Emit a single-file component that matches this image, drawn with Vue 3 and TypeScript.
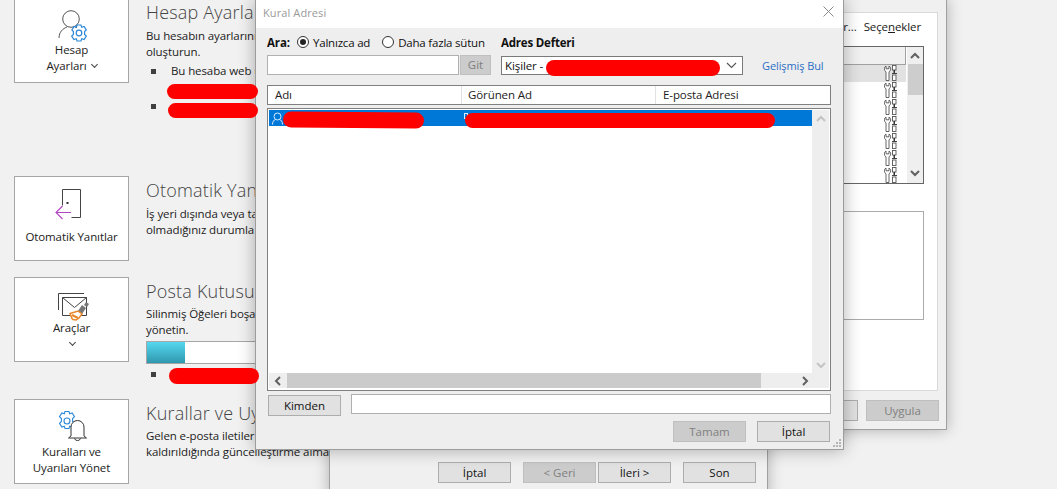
<script setup lang="ts">
const rows: number[] = [0, 1, 2, 3, 4, 5, 6]
</script>

<template>
  <div class="page">
    <svg width="0" height="0" class="defs">
      <symbol id="tools" viewBox="0 0 15 17">
        <path d="M2 1A3.300 3.300 0 0 0 2 6.800V15.500H5V6.800A3.300 3.300 0 0 0 5 1V3.800H2z" fill="#fff" stroke="#555" stroke-width="0.900" />
        <rect x="8.500" y="0.500" width="3.500" height="4.500" fill="#fff" stroke="#555" stroke-width="0.900" />
        <path d="M10.250 5v4" stroke="#333" stroke-width="1.500" />
        <path d="M8 8.500h5" stroke="#444" />
        <rect x="8.500" y="10" width="3.500" height="5.500" fill="#fff" stroke="#555" stroke-width="0.900" />
      </symbol>
    </svg>

    <!-- backstage content -->
    <main class="backstage">
      <section class="sec sec1">
        <button class="tile tile1">
          <svg class="ico" width="40" height="36" viewBox="0 0 40 36">
            <circle cx="18" cy="11" r="8.300" fill="none" stroke="#555" stroke-width="1" />
            <path d="M6 30c0-6 4-9.500 8-11M22 19l2 .7" fill="none" stroke="#555" />
            <g fill="none" stroke="#2b88d8" stroke-width="1.200" transform="translate(-1 1)">
              <circle cx="27" cy="24" r="2.800" />
              <path d="M25 16h4l.7 2.300 2.400-.8 2.200 3.500-1.700 1.600v2.800l1.700 1.600-2.200 3.500-2.400-.8-.7 2.300h-4l-.7-2.300-2.400.8-2.200-3.500 1.700-1.600V22.600L19.900 21l2.200-3.500 2.400.8z" />
            </g>
          </svg>
          <span>Hesap<br />Ayarları <i class="chev"></i></span>
        </button>
        <div class="info">
          <h2>Hesap Ayarla</h2>
          <p>Bu hesabın ayarlarını<br />oluşturun.</p>
          <ul>
            <li>Bu hesaba web ü</li>
            <li class="gap">&nbsp;</li>
          </ul>
        </div>
      </section>

      <section class="sec sec2">
        <button class="tile tile2">
          <svg class="ico" width="28" height="33" viewBox="0 0 28 33">
            <path d="M7.500 18.500V2.500h18v28h-9" fill="none" stroke="#444" />
            <rect x="11.500" y="15" width="2" height="2" fill="#333" />
            <path d="M16 25.500H1M7.500 19L1 25.500 7.500 32" fill="none" stroke="#b146c2" stroke-width="1.100" />
          </svg>
          <span>Otomatik Yanıtlar</span>
        </button>
        <div class="info">
          <h2>Otomatik Yan</h2>
          <p>İş yeri dışında veya ta<br />olmadığınız durumla</p>
        </div>
      </section>

      <section class="sec sec3">
        <button class="tile tile3">
          <svg class="ico" width="32" height="30" viewBox="0 0 32 30">
            <path d="M1.500 18V1.500H27" fill="none" stroke="#444" />
            <path d="M5.500 5.500h24v18h-24z" fill="#fff" stroke="#444" />
            <path d="M5.500 5.500l12 10 12-10" fill="none" stroke="#444" />
            <path d="M25 13l4 3-4 6-4-3z" fill="#777" />
            <path d="M30 15l-3-2 2-3 3 2z" fill="#777" />
            <path d="M21 19l4 3-3 4-3 2-3-.5-1-1-2-5z" fill="#fff" stroke="#e8882a" stroke-width="1.500" />
            <path d="M15 23l6 3" stroke="#e8882a" stroke-width="2" />
          </svg>
          <span>Araçlar<br /><i class="chev"></i></span>
        </button>
        <div class="info">
          <h2>Posta Kutusu</h2>
          <p>Silinmiş Öğeleri boşa<br />yönetin.</p>
          <div class="meter"><div class="meter-fill"></div></div>
          <ul class="meter-list">
            <li>&nbsp;</li>
          </ul>
        </div>
      </section>

      <section class="sec sec4">
        <button class="tile tile4">
          <svg class="ico" width="32" height="30" viewBox="0 0 32 30">
            <g fill="none" stroke="#2b88d8" stroke-width="1.100">
              <circle cx="10" cy="10" r="3" />
              <path d="M8 .5h4l.7 2.300 2.400-.8 2.400 3.700-1.900 1.800v3l1.900 1.800-2.400 3.700-2.400-.8-.7 2.300H8l-.7-2.300-2.400.8-2.400-3.700 1.900-1.800v-3L2.500 5.700 4.900 2l2.400.8z" />
            </g>
            <path d="M14 25v-9a6.500 6.500 0 0 1 13 0v9l2.500 2h-18z" fill="#fff" stroke="#333" />
            <path d="M17.500 27.500a3.200 3.200 0 0 0 6 0" fill="none" stroke="#333" />
          </svg>
          <span>Kuralları ve<br />Uyarıları Yönet</span>
        </button>
        <div class="info">
          <h2>Kurallar ve Uy</h2>
          <p>Gelen e-posta iletiler<br />kaldırıldığında güncelleştirme alma</p>
        </div>
      </section>
    </main>

    <!-- window behind, to the right -->
    <div class="win win-a">
      <div class="panel">
        <div class="panel-top">
          <span class="more">Çalıştır...</span>
          <span class="opts">Seçe<u>n</u>ekler</span>
        </div>
        <div class="rule-list">
          <div class="rule-main">
            <div class="rule-head"></div>
            <div v-for="r in rows" :key="r" class="rule-row" :class="{ active: r === 0 }">
              <svg width="15" height="17" class="tools"><use href="#tools" /></svg>
            </div>
          </div>
          <div class="rule-scroll">
            <svg class="arr" width="10" height="8" viewBox="0 0 10 8"><path d="M1 6l4-4 4 4" fill="none" stroke="#606060" stroke-width="2" /></svg>
            <div class="rule-thumb"></div>
            <svg class="arr down" width="10" height="8" viewBox="0 0 10 8"><path d="M1 2l4 4 4-4" fill="none" stroke="#606060" stroke-width="2" /></svg>
          </div>
        </div>
        <div class="desc-box"></div>
      </div>
      <div class="win-a-btns">
        <button class="btn"></button>
        <button class="btn off">Uygula</button>
      </div>
    </div>

    <!-- wizard window below -->
    <div class="win win-b">
      <button class="btn">İptal</button>
      <button class="btn off geri">&lt; Geri</button>
      <button class="btn">İleri &gt;</button>
      <button class="btn son">Son</button>
    </div>

    <!-- address dialog -->
    <div class="dialog">
      <header class="titlebar">
        <span>Kural Adresi</span>
        <svg width="11" height="11" viewBox="0 0 11 11"><path d="M.5.5l10 10M10.500.5l-10 10" stroke="#8a8a8a" /></svg>
      </header>
      <div class="dbody">
        <div class="search-row">
          <div class="search-left">
            <div class="radios">
              <b>Ara:</b>
              <span class="radio on"></span><label class="l1">Yalnızca ad</label>
              <span class="radio r2"></span><label>Daha fazla sütun</label>
            </div>
            <div class="find">
              <input class="field find-in" />
              <button class="btn off git">Git</button>
            </div>
          </div>
          <div class="search-right">
            <b>Adres Defteri</b>
            <div class="book">
              <div class="select">
                <span>Kişiler - </span>
                <svg width="11" height="7" viewBox="0 0 11 7"><path d="M1 1l4.500 4.500L10 1" fill="none" stroke="#555" stroke-width="1.100" /></svg>
              </div>
              <a class="adv">Gelişmiş Bul</a>
            </div>
          </div>
        </div>

        <div class="head">
          <span class="c1">Adı</span>
          <span class="c2">Görünen Ad</span>
          <span class="c3">E-posta Adresi</span>
        </div>

        <div class="list">
          <div class="list-top">
            <div class="list-main">
              <div class="sel-row">
                <svg width="11" height="13" viewBox="0 0 11 13"><circle cx="5.500" cy="4.500" r="3.500" fill="none" stroke="#d8ecff" /><path d="M.5 12.500c0-3 1.500-4.500 3-5M10.500 12.500c0-3-1.500-4.500-3-5" fill="none" stroke="#d8ecff" /></svg>
                <i class="doc"></i>
              </div>
            </div>
            <div class="vscroll">
              <svg width="10" height="8" viewBox="0 0 10 8"><path d="M1 6l4-4 4 4" fill="none" stroke="#c4c4c4" stroke-width="2" /></svg>
              <svg width="10" height="8" viewBox="0 0 10 8"><path d="M1 2l4 4 4-4" fill="none" stroke="#c4c4c4" stroke-width="2" /></svg>
            </div>
          </div>
          <div class="hscroll">
            <svg width="8" height="10" viewBox="0 0 8 10"><path d="M6 1L2 5l4 4" fill="none" stroke="#606060" stroke-width="2" /></svg>
            <div class="hthumb"></div>
            <svg width="8" height="10" viewBox="0 0 8 10"><path d="M2 1l4 4-4 4" fill="none" stroke="#606060" stroke-width="2" /></svg>
          </div>
        </div>

        <div class="from-row">
          <button class="btn">Kimden</button>
          <input class="field from-in" />
        </div>
        <div class="ok-row">
          <button class="btn off">Tamam</button>
          <button class="btn">İptal</button>
        </div>
      </div>
      <svg class="grip" width="9" height="9" viewBox="0 0 9 9" fill="#b5b5b5">
        <rect x="6" y="0" width="2" height="2" /><rect x="3" y="3" width="2" height="2" /><rect x="6" y="3" width="2" height="2" />
        <rect x="0" y="6" width="2" height="2" /><rect x="3" y="6" width="2" height="2" /><rect x="6" y="6" width="2" height="2" />
      </svg>
    </div>

    <!-- redaction strokes drawn over the screenshot -->
    <div class="red r-a"></div>
    <div class="red r-b"></div>
    <div class="red r-c"></div>
    <div class="red r-d"></div>
    <div class="red r-e"></div>
    <div class="red r-f"></div>
  </div>
</template>

<style scoped>
.page {
  position: relative;
  width: 1057px;
  height: 489px;
  overflow: hidden;
  background: #f1f1f1;
  font-family: "Open Sans", "Noto Sans", sans-serif;
  font-size: 11.5px;
  color: #222;
  letter-spacing: -0.1px;
}
.defs { position: absolute; }
button { font: inherit; letter-spacing: inherit; color: inherit; }

/* backstage */
.backstage { display: flex; flex-direction: column; padding-left: 14px; margin-top: -2px; }
.sec { display: flex; gap: 17px; }
.sec1 { height: 178px; }
.sec2 { height: 101px; }
.sec3 { height: 122px; }
.tile {
  flex: none;
  width: 115px;
  height: 85px;
  box-sizing: border-box;
  background: #fff;
  border: 1px solid #a6a6a6;
  display: flex;
  flex-direction: column;
  align-items: center;
  padding: 0;
  line-height: 16px;
  text-align: center;
}
.ico { flex: none; display: block; }
.tile1 .ico { margin-top: 9px; margin-left: 3px; margin-bottom: -2px; }
.tile2 .ico { margin-top: 10px; margin-bottom: 9px; margin-left: -5px; }
.tile3 .ico { margin-top: 14px; margin-bottom: -2px; margin-left: 2px; }
.tile4 .ico { margin-top: 11px; margin-bottom: 3px; margin-left: 2px; }
.chev {
  display: inline-block;
  width: 4px;
  height: 4px;
  border-right: 1px solid #444;
  border-bottom: 1px solid #444;
  transform: rotate(45deg);
  margin: 0 0 3px 2px;
}
.info { width: 200px; flex: none; white-space: nowrap; }
.info h2 { margin: 0; font-size: 18px; line-height: 24px; font-weight: 300; color: #444; letter-spacing: 0.2px; padding-top: 2px; }
.info p { margin: 3px 0 0; line-height: 16px; color: #222; }
.sec1 .info h2 { padding-top: 0; }
.sec1 .info { padding-top: 2px; }
.sec1 .info p, .sec2 .info p { margin-top: 4px; }
.sec1 ul li:first-child { margin-top: 3px; }
ul { list-style: none; margin: 0; padding: 0; }
li { position: relative; padding-left: 25px; line-height: 16px; margin-top: 4px; }
li::before { content: ""; position: absolute; left: 5px; top: 6px; width: 5px; height: 5px; background: #404040; }
li.gap { margin-top: 19px; }
.meter { width: 200px; height: 23px; box-sizing: border-box; margin-top: 3px; background: #fff; border: 1px solid #a6a6a6; }
.meter-fill { width: 38px; height: 100%; background: linear-gradient(#55d8f0, #2f97ad); }
.meter-list li { margin-top: 2px; }

/* generic window */
.win {
  position: absolute;
  box-sizing: border-box;
  background: #f0f0f0;
  border: 1px solid #a0a0a0;
  box-shadow: 0 0 14px rgba(0, 0, 0, 0.28);
}
.win-a { left: 600px; top: -1px; width: 347px; height: 431px; padding: 12px 8px 0 0; display: flex; flex-direction: column; }
.panel { height: 379px; flex: none; box-sizing: border-box; background: #fff; border: 1px solid #d9d9d9; border-left: none; padding: 0 13px 0 0; display: flex; flex-direction: column; align-items: stretch; }
.panel-top { height: 33px; flex: none; display: flex; justify-content: flex-end; align-items: center; gap: 7px; padding-bottom: 6px; box-sizing: border-box; color: #1a1a1a; }
.opts { margin-right: 3px; }
.rule-list { height: 138px; box-sizing: border-box; flex: none; border: 1px solid #666; border-left: none; display: flex; }
.rule-main { flex: 1; overflow: hidden; }
.rule-head { height: 17px; background: #f0f0f0; border-bottom: 1px solid #a0a0a0; border-right: 1px solid #a0a0a0; }
.rule-row { height: 17px; display: flex; justify-content: flex-end; padding-right: 7px; overflow: visible; }
.rule-row.active { background: #e2e2e2; }
.tools { display: block; flex: none; }
.rule-scroll { width: 16px; flex: none; background: #efefef; display: flex; flex-direction: column; align-items: center; padding-top: 5px; box-sizing: border-box; margin-left: 1px; }
.arr { display: block; flex: none; }
.rule-thumb { width: 15px; height: 31px; background: #cdcdcd; margin-top: 4px; }
.arr.down { margin-top: auto; margin-bottom: 6px; }
.desc-box { height: 109px; box-sizing: border-box; flex: none; margin-top: 27px; border: 1px solid #ababab; border-left: none; }
.win-a-btns { display: flex; justify-content: flex-end; gap: 8px; margin-top: 9px; margin-right: -1px; }
.btn {
  width: 73px;
  height: 21px;
  flex: none;
  box-sizing: border-box;
  background: #e1e1e1;
  border: 1px solid #adadad;
  padding: 0;
  line-height: 18px;
  color: #111;
  letter-spacing: 0;
}
.btn.off { background: #cccccc; border-color: #bfbfbf; color: #7f7f7f; }

.win-b { left: 329px; top: 440px; width: 439px; height: 60px; padding: 21px 0 0 108px; display: flex; gap: 2px; }
.win-b .geri { margin-left: 10px; }
.win-b .son { margin-left: 10px; }

/* dialog */
.dialog {
  position: absolute;
  left: 255px;
  top: -1px;
  width: 589px;
  height: 451px;
  box-sizing: border-box;
  background: #eeeeee;
  border: 1px solid #9c9c9c;
  box-shadow: 0 0 16px rgba(0, 0, 0, 0.3);
}
.titlebar { height: 28px; box-sizing: border-box; padding: 0 9px 3px 7px; background: #fff; display: flex; align-items: center; justify-content: space-between; color: #9a9a9a; font-size: 11px; letter-spacing: 0.1px; }
.titlebar svg { display: block; margin-top: -2px; }
.dbody { padding: 7px 12px 0 11px; }
.search-row { display: flex; height: 44px; }
.search-left { width: 234px; flex: none; }
.search-right { flex: 1; }
b { font-weight: 700; color: #111; }
.radios { display: flex; align-items: center; height: 14px; white-space: nowrap; color: #111; }
.radios label { letter-spacing: -0.2px; }
.radio { width: 12px; height: 12px; box-sizing: border-box; border: 1px solid #333; border-radius: 50%; background: #fff; margin-left: 7px; margin-right: 4px; flex: none; position: relative; }
.radio.r2 { margin-left: 12px; }
.radio.on::after { content: ""; position: absolute; inset: 2px; border-radius: 50%; background: #222; }
.find { display: flex; margin-top: 6px; gap: 1px; }
.field { box-sizing: border-box; background: #fff; border: 1px solid #b0b0b0; padding: 0; outline: none; display: block; }
.find-in { width: 192px; height: 20px; }
.git { width: 31px; height: 20px; }
.search-right b { display: block; line-height: 14px; padding-top: 1px; letter-spacing: -0.2px; }
.book { display: flex; align-items: center; margin-top: 6px; }
.select { width: 242px; height: 19px; box-sizing: border-box; border: 1px solid #7a7a7a; background: #fff; display: flex; align-items: center; justify-content: space-between; padding: 0 5px 0 3px; color: #111; }
.adv { margin-left: 19px; color: #2b6fc4; white-space: nowrap; font-size: 11px; }
.head { margin-top: 6px; height: 20px; width: 564px; box-sizing: border-box; background: #fff; border: 1px solid #808080; display: flex; align-items: center; color: #222; }
.head span { height: 100%; box-sizing: border-box; line-height: 17px; padding-left: 7px; border-right: 1px solid #e2e2e2; }
.c1 { width: 194px; }
.c2 { width: 194px; padding-left: 6px !important; }
.c3 { border-right: none !important; }
.list { margin-top: 3px; width: 564px; height: 283px; box-sizing: border-box; background: #fff; border: 1px solid #808080; padding: 1px; display: flex; flex-direction: column; }
.list-top { flex: 1; display: flex; min-height: 0; }
.list-main { flex: 1; }
.sel-row { height: 16px; background: #0078d7; display: flex; align-items: center; padding-left: 3px; }
.sel-row svg { display: block; flex: none; }
.doc { width: 4px; height: 6px; box-sizing: border-box; border: 1px solid #d8ecff; margin: -5px 0 0 181px; flex: none; }
.vscroll { width: 17px; flex: none; background: #eeeeee; display: flex; flex-direction: column; align-items: center; justify-content: space-between; padding: 5px 0 4px; box-sizing: border-box; }
.hscroll { height: 15px; flex: none; background: #eeeeee; display: flex; align-items: center; margin-bottom: 1px; }
.hscroll svg { flex: none; margin-left: 5px; display: block; }
.hthumb { width: 474px; height: 100%; background: #cbcbcb; margin-left: 5px; }
.hscroll svg:last-child { margin-left: 40px; }
.from-row { display: flex; gap: 10px; margin-top: 3px; padding-left: 1px; }
.from-row .btn { margin-top: 1px; }
.from-in { width: 480px; height: 20px; }
.ok-row { display: flex; justify-content: flex-end; gap: 11px; margin-top: 5px; padding-right: 1px; width: 564px; box-sizing: border-box; }
.grip { position: absolute; right: 1px; bottom: 1px; display: block; }

/* redactions */
.red { position: absolute; background: #fe0000; border-radius: 9px; }
.r-a { left: 167px; top: 84px; width: 91px; height: 15px; }
.r-b { left: 168px; top: 103px; width: 90px; height: 15px; }
.r-c { left: 169px; top: 368px; width: 90px; height: 16px; }
.r-d { left: 283px; top: 112px; width: 141px; height: 16px; transform: rotate(0.5deg); }
.r-e { left: 465px; top: 113px; width: 310px; height: 15px; }
.r-f { left: 546px; top: 60px; width: 174px; height: 16px; }
</style>
